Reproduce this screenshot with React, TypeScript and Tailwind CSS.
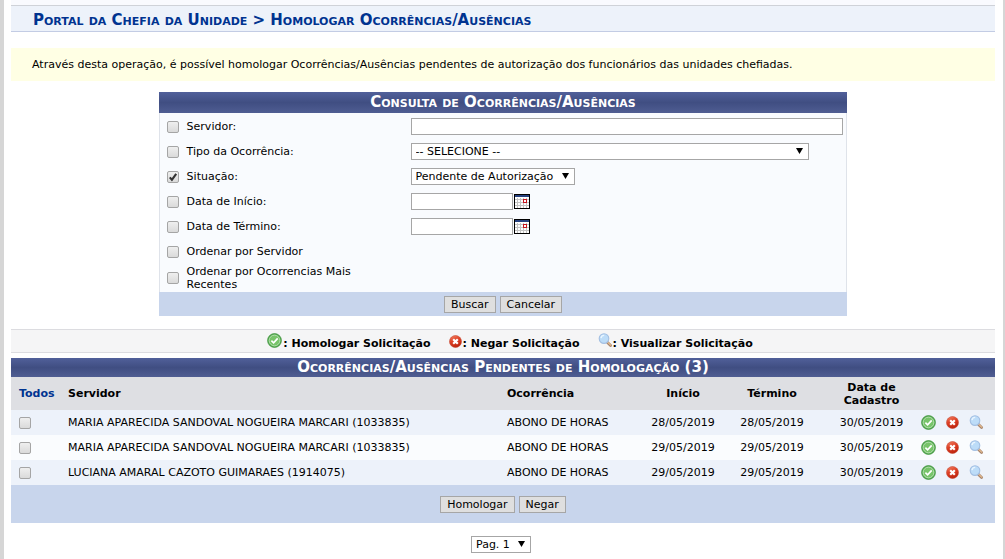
import { useState } from "react";
import type { ReactNode, SelectHTMLAttributes, InputHTMLAttributes, ButtonHTMLAttributes } from "react";

const ocorrencias = [
  { id: 1, servidor: "MARIA APARECIDA SANDOVAL NOGUEIRA MARCARI (1033835)", tipo: "ABONO DE HORAS", inicio: "28/05/2019", termino: "28/05/2019", cadastro: "30/05/2019" },
  { id: 2, servidor: "MARIA APARECIDA SANDOVAL NOGUEIRA MARCARI (1033835)", tipo: "ABONO DE HORAS", inicio: "29/05/2019", termino: "29/05/2019", cadastro: "30/05/2019" },
  { id: 3, servidor: "LUCIANA AMARAL CAZOTO GUIMARAES (1914075)", tipo: "ABONO DE HORAS", inicio: "29/05/2019", termino: "29/05/2019", cadastro: "30/05/2019" },
];

const CheckIcon = () => (
  <svg viewBox="0 0 15 15" className="block size-[15px] shrink-0" aria-hidden="true">
    <circle cx="7.5" cy="7.5" r="6.9" fill="#4fa84a" stroke="#459643" strokeWidth="0.8" />
    <circle cx="7.5" cy="7.5" r="5.4" fill="#78c46a" stroke="#c0e4ba" strokeWidth="0.9" />
    <path d="M4.4 7.7 6.6 9.8 10.7 5.4" fill="none" stroke="#fff" strokeWidth="1.7" />
  </svg>
);

const DenyIcon = () => (
  <svg viewBox="0 0 13 13" className="block size-[13px] shrink-0" aria-hidden="true">
    <defs>
      <linearGradient id="deny" x1="0" y1="0" x2="0.4" y2="1">
        <stop offset="0" stopColor="#f58a6c" />
        <stop offset="0.5" stopColor="#de4025" />
        <stop offset="1" stopColor="#c0260f" />
      </linearGradient>
    </defs>
    <circle cx="6.5" cy="6.5" r="6" fill="url(#deny)" stroke="#c4452f" strokeWidth="0.6" />
    <path d="M4.2 4.2 8.8 8.8M8.8 4.2 4.2 8.8" stroke="#fff" strokeWidth="2.2" />
  </svg>
);

const ViewIcon = () => (
  <svg viewBox="0 0 15 15" className="block size-[15px] shrink-0" aria-hidden="true">
    <path d="M9 9 12.6 12.6" stroke="#a4826b" strokeWidth="2.8" strokeLinecap="round" />
    <path d="M9.4 9 12.8 12.2" stroke="#e2b98d" strokeWidth="1.2" strokeLinecap="round" />
    <circle cx="6" cy="5.6" r="4.8" fill="#bcdcf8" stroke="#a3bfe2" strokeWidth="1.1" />
    <path d="M3 5.2A3.2 3.2 0 0 1 6.2 2.4" fill="none" stroke="#e9f5ff" strokeWidth="1.4" />
  </svg>
);

const CalendarIcon = () => (
  <svg viewBox="0 0 16 15" className="block h-[15px] w-4" shapeRendering="crispEdges" aria-hidden="true">
    <rect width="16" height="15" fill="#000" />
    <rect x="1" y="1" width="14" height="2" fill="#26417f" />
    <rect x="1" y="3" width="14" height="11" fill="#fff" />
    <path d="M3.5 4v10M6.5 4v10M9.5 4v10M12.5 4v10M1 5.5h14M1 8.5h14M1 11.5h14" stroke="#c4c4c4" />
    <rect x="9.5" y="5.5" width="3" height="3" fill="#fff" stroke="#c8141e" />
  </svg>
);

const Checkbox = (props: InputHTMLAttributes<HTMLInputElement>) => (
  <span className="relative block size-3 shrink-0">
    <input
      type="checkbox"
      className="peer block size-3 appearance-none rounded-xs border border-[#a5a5a5] bg-linear-to-b from-[#efefef] to-[#dadada]"
      {...props}
    />
    <svg viewBox="0 0 12 12" className="pointer-events-none absolute inset-0 hidden size-3 peer-checked:block" aria-hidden="true">
      <path d="M2.8 6.4 4.9 8.8 9.2 2.8" fill="none" stroke="#333" strokeWidth="2.1" />
    </svg>
  </span>
);

const Select = ({ className, children, ...props }: SelectHTMLAttributes<HTMLSelectElement>) => (
  <span className={`relative block max-w-full ${className ?? ""}`}>
    <select className="block h-[17px] w-full appearance-none border border-[#a6a6a6] bg-white pl-1 pr-4 leading-[15px]" {...props}>
      {children}
    </select>
    <svg viewBox="0 0 7 6" className="pointer-events-none absolute right-1.5 top-[5px] h-1.5 w-[7px]" aria-hidden="true">
      <path d="M0 0h7L3.5 6z" fill="#000" />
    </svg>
  </span>
);

const Button = (props: ButtonHTMLAttributes<HTMLButtonElement>) => (
  <button type="button" className="h-[17px] border border-[#a6a6a6] bg-[#dfdfdf] px-1.5 leading-[15px]" {...props} />
);

const FilterRow = ({ id, label, checked, children }: { id: string; label: string; checked?: boolean; children?: ReactNode }) => (
  <div className="flex min-h-[25px] items-center pl-[7px] pr-[3px]">
    <Checkbox id={id} defaultChecked={checked} />
    <label htmlFor={id} className="ml-2 mr-4 w-52 shrink-0">
      {label}
    </label>
    {children}
  </div>
);

const DateField = ({ label }: { label: string }) => (
  <div className="flex items-center gap-px">
    <input type="text" aria-label={label} className="h-[17px] w-[102px] border border-[#a6a6a6] bg-white px-1" />
    <button type="button" aria-label={`Calendário: ${label}`}>
      <CalendarIcon />
    </button>
  </div>
);

const FilterForm = () => (
  <form className="mx-auto mt-[11px] w-[70%]">
    <h2 className="bg-linear-to-b from-[#51609a] via-[#404e82] to-[#4f5d92] text-center text-[15px] leading-[21px] font-bold text-white [font-variant:small-caps]">
      Consulta de Ocorrências/Ausências
    </h2>
    <div className="border-x border-[#dfe3ea] bg-[#f9fbfe] pt-px">
      <FilterRow id="servidor" label="Servidor:">
        <input type="text" aria-label="Servidor" className="h-[17px] min-w-0 flex-1 border border-[#a6a6a6] bg-white px-1" />
      </FilterRow>
      <FilterRow id="tipo" label="Tipo da Ocorrência:">
        <Select className="w-[398px]" aria-label="Tipo da Ocorrência">
          <option>-- SELECIONE --</option>
        </Select>
      </FilterRow>
      <FilterRow id="situacao" label="Situação:" checked>
        <Select className="w-[164px]" aria-label="Situação">
          <option>Pendente de Autorização</option>
        </Select>
      </FilterRow>
      <FilterRow id="inicio" label="Data de Início:">
        <DateField label="Data de Início" />
      </FilterRow>
      <FilterRow id="termino" label="Data de Término:">
        <DateField label="Data de Término" />
      </FilterRow>
      <FilterRow id="ordenarServidor" label="Ordenar por Servidor" />
      <div className="py-px">
        <FilterRow id="ordenarRecentes" label="Ordenar por Ocorrencias Mais Recentes" />
      </div>
    </div>
    <div className="flex h-6 items-center justify-center gap-1 bg-[#c8d5ec]">
      <Button>Buscar</Button>
      <Button>Cancelar</Button>
    </div>
  </form>
);

const Legend = () => (
  <div className="mt-[13px] flex h-6 items-center justify-center gap-[18px] border-y border-[#dcdce0] bg-[#f5f5f6] pl-3.5 font-bold">
    <span className="flex items-start gap-px">
      <CheckIcon />
      <span className="pt-1">: Homologar Solicitação</span>
    </span>
    <span className="flex items-start gap-px">
      <span className="pt-0.5">
        <DenyIcon />
      </span>
      <span className="pt-1">: Negar Solicitação</span>
    </span>
    <span className="flex items-start">
      <ViewIcon />
      <span className="pt-1">: Visualizar Solicitação</span>
    </span>
  </div>
);

const Results = () => {
  const [selected, setSelected] = useState<number[]>([]);

  const toggle = (id: number) => {
    setSelected(selected.includes(id) ? selected.filter((s) => s !== id) : [...selected, id]);
  };

  const toggleAll = () => {
    setSelected(selected.length === ocorrencias.length ? [] : ocorrencias.map((o) => o.id));
  };

  return (
    <div className="mt-[5px]">
      <table className="w-full table-fixed">
        <caption className="bg-linear-to-b from-[#51609a] via-[#404e82] to-[#4f5d92] text-center text-[15px] leading-[19px] font-bold text-white [font-variant:small-caps]">
          Ocorrências/Ausências Pendentes de Homologação (3)
        </caption>
        <thead>
          <tr className="h-[33px] bg-[#dedfe3]">
            <th className="w-[49px] pl-2 text-left text-[#003390]">
              <a
                href="#todos"
                onClick={(e) => {
                  e.preventDefault();
                  toggleAll();
                }}
              >
                Todos
              </a>
            </th>
            <th className="pl-2 text-left">Servidor</th>
            <th className="w-[140px] pl-2 text-left">Ocorrência</th>
            <th className="w-[88px]">Início</th>
            <th className="w-[90px]">Término</th>
            <th className="w-[99px] pl-2.5">
              Data de
              <br />
              Cadastro
            </th>
            <th className="w-6" />
            <th className="w-6" />
            <th className="w-[31px]" />
          </tr>
        </thead>
        <tbody>
          {ocorrencias.map((o) => (
            <tr key={o.id} className="h-[25px] odd:bg-[#edf2fa] even:bg-[#fafcfe]">
              <td className="pl-2">
                <Checkbox aria-label={o.servidor} checked={selected.includes(o.id)} onChange={() => toggle(o.id)} />
              </td>
              <td className="pl-2">{o.servidor}</td>
              <td className="pl-2">{o.tipo}</td>
              <td className="text-center">{o.inicio}</td>
              <td className="text-center">{o.termino}</td>
              <td className="pl-2.5 text-center">{o.cadastro}</td>
              <td>
                <button type="button" aria-label="Homologar Solicitação" className="mx-auto block">
                  <CheckIcon />
                </button>
              </td>
              <td>
                <button type="button" aria-label="Negar Solicitação" className="mx-auto block">
                  <DenyIcon />
                </button>
              </td>
              <td className="pr-1.5">
                <button type="button" aria-label="Visualizar Solicitação" className="mx-auto block">
                  <ViewIcon />
                </button>
              </td>
            </tr>
          ))}
        </tbody>
      </table>
      <div className="flex h-[38px] items-center justify-center gap-1 bg-[#c8d5ec]">
        <Button>Homologar</Button>
        <Button>Negar</Button>
      </div>
    </div>
  );
};

export default function App() {
  return (
    <div className="min-h-screen border-l-4 border-r-2 border-[#d6d6d6] bg-white pl-[7px] pr-2 font-['DejaVu_Sans',Verdana,sans-serif] text-[11px] leading-[13px] text-black">
      <header className="border-b border-[#c3cce4] bg-[#f9fafe] pt-[5px]">
        <h1 className="border-t border-[#cfd2d8] bg-[#edf2fa] pl-[22px] pt-1 text-[15px] leading-[21px] font-bold text-[#003390] [font-variant:small-caps]">
          Portal da Chefia da Unidade &gt; Homologar Ocorrências/Ausências
        </h1>
      </header>
      <p className="mt-4 bg-[#ffffe4] px-[21px] py-2.5">
        Através desta operação, é possível homologar Ocorrências/Ausências pendentes de autorização dos funcionários das unidades chefiadas.
      </p>
      <FilterForm />
      <Legend />
      <Results />
      <nav className="mt-[13px] flex justify-center pr-1">
        <Select className="w-[60px]" aria-label="Página">
          <option>Pag. 1</option>
        </Select>
      </nav>
    </div>
  );
}
